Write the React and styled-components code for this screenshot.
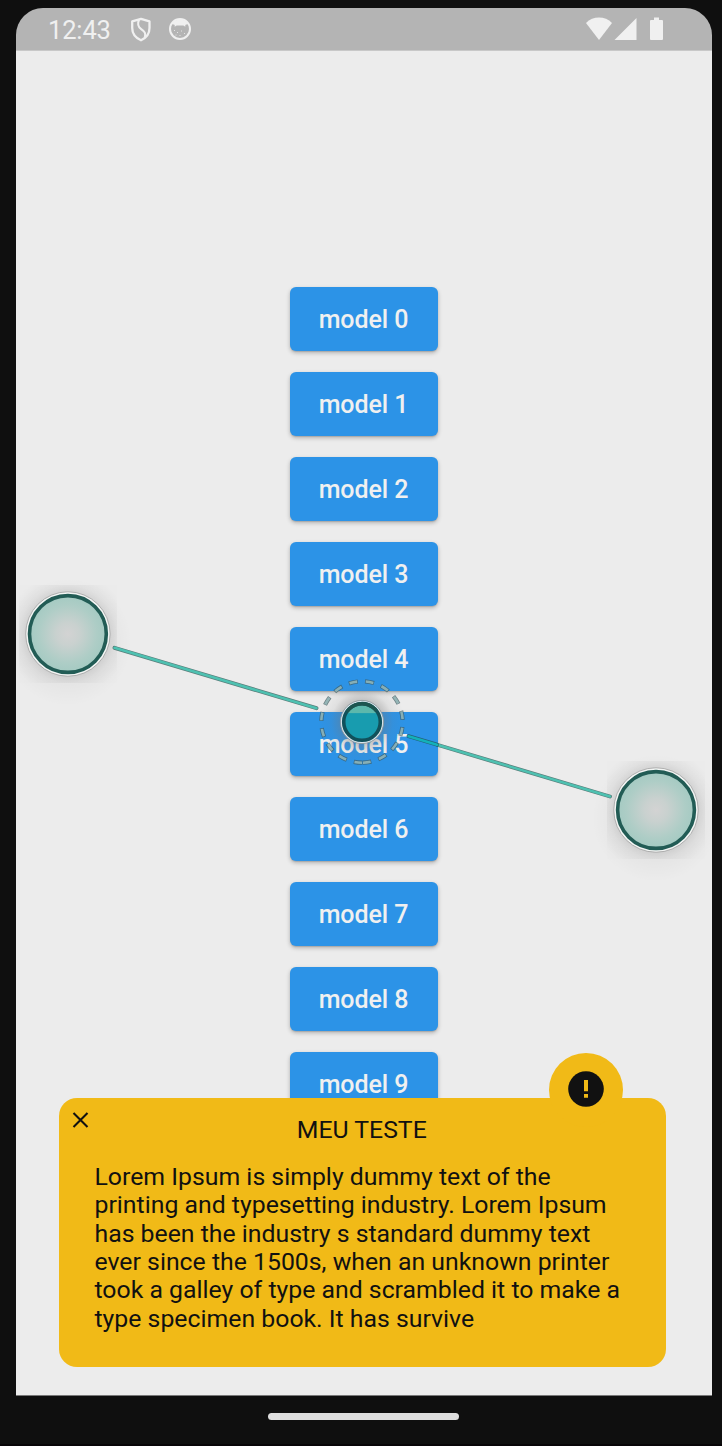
import React from 'react';
import styled, { createGlobalStyle } from 'styled-components';

const GlobalStyle = createGlobalStyle`
  html, body { margin: 0; background: #0f0f0f; }
  body { font-family: Roboto, "Liberation Sans", sans-serif; overflow: hidden; }
  *, *::before, *::after { box-sizing: border-box; }
`;

const Device = styled.div`
  position: relative;
  display: flex;
  flex-direction: column;
  width: 722px;
  height: 1446px;
  padding: 8px 10px 0 16px;
  background: #0f0f0f;
  border-bottom: 2px solid #080508;
  overflow: hidden;
`;

const StatusBar = styled.header`
  display: flex;
  justify-content: space-between;
  height: 43px;
  flex: none;
  padding: 0 48.5px 0 32px;
  background: #b4b4b4;
  border-bottom: 1px solid #c8c8c8;
  border-radius: 27px 27px 0 0;
  color: #f0f0f0;
`;

const StatusGroup = styled.div`
  display: flex;
  align-items: center;
`;

const Clock = styled.span`
  width: 81.5px;
  font-size: 25.5px;
  line-height: 30px;
  letter-spacing: -0.15px;
  padding-top: 1px;
`;

const StatusIcon = styled.svg`
  display: block;
  flex: none;
  margin-left: ${({ $gap }) => $gap || 0}px;
`;

const Screen = styled.main`
  display: flex;
  flex-direction: column;
  justify-content: space-between;
  height: 1345px;
  flex: none;
  background: #ececec;
  border-bottom: 1px solid #777;
`;

const ModelList = styled.div`
  display: flex;
  flex-direction: column;
  align-items: center;
  gap: 21.4px;
  height: 1047px;
  padding-top: 236.4px;
  overflow: hidden;
`;

const ModelButton = styled.button`
  flex: none;
  width: 147.6px;
  height: 63.6px;
  padding: 2px 1px 0 0;
  border: 0;
  border-radius: 6px;
  background: #2c93e7;
  box-shadow: 0 2px 4px rgba(0, 0, 0, 0.25), 0 1px 1px rgba(0, 0, 0, 0.1);
  color: #f0f0f0;
  font: 500 25px/30px Roboto, "Liberation Sans", sans-serif;
  letter-spacing: -0.08px;
`;

const Banner = styled.section`
  position: relative;
  width: 607.5px;
  height: 269px;
  flex: none;
  margin: 0 0 28px 42.5px;
  padding: 15px 36px 0;
  border-radius: 18px;
  background: #f1ba17;
  color: #111;
`;

const CloseButton = styled.button`
  position: absolute;
  top: 13px;
  left: 13px;
  display: flex;
  padding: 0;
  border: 0;
  background: none;
  color: inherit;
`;

const AlertBadge = styled.div`
  position: absolute;
  top: -45px;
  right: 43px;
  display: flex;
  align-items: center;
  justify-content: center;
  width: 74px;
  height: 74px;
  padding-bottom: 2px;
  border-radius: 50%;
  background: #f1ba17;
`;

const BannerTitle = styled.h1`
  margin: 0;
  padding-right: 1px;
  font-size: 24.8px;
  font-weight: 400;
  line-height: 34px;
  text-align: center;
`;

const BannerText = styled.p`
  margin: 15.8px 0 0;
  font-size: 24.82px;
  line-height: 28.36px;
  white-space: nowrap;
`;

const NavigationBar = styled.footer`
  display: flex;
  justify-content: center;
  padding: 17px 1px 0 0;
`;

const HomeHandle = styled.div`
  width: 191px;
  height: 7px;
  border-radius: 4px;
  background: #dedede;
`;

const GestureLayer = styled.svg`
  position: absolute;
  top: 0;
  left: 0;
  pointer-events: none;
`;

const LINES = [
  'Lorem Ipsum is simply dummy text of the',
  'printing and typesetting industry. Lorem Ipsum',
  'has been the industry s standard dummy text',
  'ever since the 1500s, when an unknown printer',
  'took a galley of type and scrambled it to make a',
  'type specimen book. It has survive',
];

function TouchPoint({ x, y }) {
  return (
    <g transform={`translate(${x} ${y})`}>
      <circle cy="8" r="64" fill="url(#glow)" />
      <rect x="-49" y="-49" width="98" height="98" fill="url(#halo)" />
      <circle r="42.2" fill="#f3f5f4" stroke="#999" strokeWidth="0.7" />
      <circle r="38.4" fill="url(#touch)" stroke="#225c55" strokeWidth="3.6" />
    </g>
  );
}

function SwipeLine({ x1, y1, x2, y2, color }) {
  return (
    <g strokeLinecap="round">
      <line x1={x1} y1={y1} x2={x2} y2={y2} stroke="#20524e" strokeOpacity="0.72" strokeWidth="3.9" />
      <line x1={x1} y1={y1} x2={x2} y2={y2} stroke={color} strokeWidth="2.5" />
    </g>
  );
}

function Gesture() {
  const orbit = 'M362 762.7 A40.7 40.7 0 0 0 362 681.3 A40.7 40.7 0 0 0 362 762.7';
  return (
    <GestureLayer width="722" height="1446" viewBox="0 0 722 1446">
      <defs>
        <radialGradient id="touch">
          <stop offset="0" stopColor="#d3d3d3" />
          <stop offset="0.3" stopColor="#c9d1cf" />
          <stop offset="0.75" stopColor="#aecdc6" />
          <stop offset="1" stopColor="#a4cac2" />
        </radialGradient>
        <radialGradient id="halo" gradientUnits="userSpaceOnUse" cx="0" cy="0" r="62">
          <stop offset="0.66" stopColor="#000" stopOpacity="0.09" />
          <stop offset="0.79" stopColor="#000" stopOpacity="0.04" />
          <stop offset="1" stopColor="#000" stopOpacity="0.005" />
        </radialGradient>
        <radialGradient id="glow">
          <stop offset="0.55" stopColor="#000" stopOpacity="0.04" />
          <stop offset="1" stopColor="#000" stopOpacity="0" />
        </radialGradient>
        <radialGradient id="centerHalo">
          <stop offset="0.5" stopColor="#777" stopOpacity="0.36" />
          <stop offset="0.72" stopColor="#777" stopOpacity="0.1" />
          <stop offset="1" stopColor="#777" stopOpacity="0" />
        </radialGradient>
        <linearGradient id="center" x1="0" y1="0" x2="0" y2="1">
          <stop offset="0.25" stopColor="#5cb8ac" />
          <stop offset="0.27" stopColor="#189caf" />
        </linearGradient>
      </defs>
      <TouchPoint x={67.9} y={634} />
      <TouchPoint x={656} y={810} />
      <SwipeLine x1={114.5} y1={647.8} x2={316.5} y2={708.2} color="#4ec1b1" />
      <SwipeLine x1={438} y1={745} x2={610} y2={796.5} color="#4ec1b1" />
      <SwipeLine x1={408.5} y1={736.2} x2={437} y2={744.7} color="#13b1ba" />
      <circle cx="362" cy="722" r="43" fill="url(#centerHalo)" />
      <path d={orbit} fill="none" stroke="#3e5a60" strokeOpacity="0.7" strokeWidth="4.2" strokeDasharray="9.1 7.35" strokeDashoffset="-0.3" />
      <path d={orbit} fill="none" stroke="#a0c6c6" strokeOpacity="0.75" strokeWidth="2.6" strokeDasharray="7.7 8.75" strokeDashoffset="-1" />
      <circle cx="362" cy="722" r="21.6" fill="#d9e8f0" stroke="#8a9498" strokeWidth="0.8" />
      <circle cx="362" cy="722" r="18.3" fill="url(#center)" stroke="#11515b" strokeWidth="3.6" />
      <circle cx="362" cy="722" r="18.3" fill="none" stroke="#1d5550" strokeWidth="3.6" strokeDasharray="34 200" transform="rotate(-145 362 722)" />
    </GestureLayer>
  );
}

export default function App() {
  return (
    <>
      <GlobalStyle />
      <Device>
        <StatusBar>
          <StatusGroup>
            <Clock>12:43</Clock>
            <StatusIcon width="22" height="25" viewBox="0 0 22 25" fill="none" stroke="currentColor" strokeWidth="2.3">
              <path d="M11 1.8L19.5 4.3V11C19.5 16.5 16 21 11 23.3C6 21 2.2 16.5 2.2 11V4.3Z" strokeLinejoin="round" />
              <path d="M9 2.5C7 7.5 8 10 11.2 12.2C14.8 14.7 16 16 14.8 20.5" strokeWidth="2.1" />
            </StatusIcon>
            <StatusIcon $gap={16.5} width="24" height="24" viewBox="0 0 24 24">
              <circle cx="12" cy="12" r="10" fill="none" stroke="currentColor" strokeWidth="2" />
              <path d="M4.5 6C8 1.3 16 1.3 19.5 6L18 8.3L17.3 7.5V9.8L15.4 8.4H8.6L6.7 9.8V7.5L6 8.3Z" fill="currentColor" />
              <path d="M6 13.5H7M9 15.5H10M13 14H14M16 16.5H17M7.5 18H8.5M11.5 18.5H12.5" stroke="currentColor" strokeWidth="0.8" />
            </StatusIcon>
          </StatusGroup>
          <StatusGroup>
            <StatusIcon width="28" height="24" viewBox="0 0 28 24" fill="currentColor">
              <path d="M1 6C8-1.2 20-1.2 27 6L14 23Z" />
            </StatusIcon>
            <StatusIcon $gap={1} width="23" height="24" viewBox="0 0 23 24" fill="currentColor">
              <path d="M22.5 1V23H.5Z" />
            </StatusIcon>
            <StatusIcon $gap={12} width="15" height="24" viewBox="0 0 15 24" fill="currentColor">
              <path d="M5 0.5H10V3H13Q14 3 14 4V22Q14 23 13 23H2Q1 23 1 22V4Q1 3 2 3H5Z" />
            </StatusIcon>
          </StatusGroup>
        </StatusBar>
        <Screen>
          <ModelList>
            {Array.from({ length: 10 }, (_, i) => (
              <ModelButton key={i}>model {i}</ModelButton>
            ))}
          </ModelList>
          <Banner>
            <CloseButton aria-label="Close">
              <svg width="18" height="18" viewBox="0 0 18 18" stroke="currentColor" strokeWidth="2.1">
                <path d="M1.5 2L15.5 16M15.5 2L1.5 16" />
              </svg>
            </CloseButton>
            <AlertBadge>
              <svg width="36" height="36" viewBox="0 0 36 36">
                <circle cx="18" cy="18" r="17.8" fill="#111" />
                <path d="M16 9H20V20.2H16ZM16 23H20V26.8H16Z" fill="#f1ba17" />
              </svg>
            </AlertBadge>
            <BannerTitle>MEU TESTE</BannerTitle>
            <BannerText>
              {LINES.map((line) => (
                <React.Fragment key={line}>
                  {line}
                  <br />
                </React.Fragment>
              ))}
            </BannerText>
          </Banner>
        </Screen>
        <NavigationBar>
          <HomeHandle />
        </NavigationBar>
        <Gesture />
      </Device>
    </>
  );
}
